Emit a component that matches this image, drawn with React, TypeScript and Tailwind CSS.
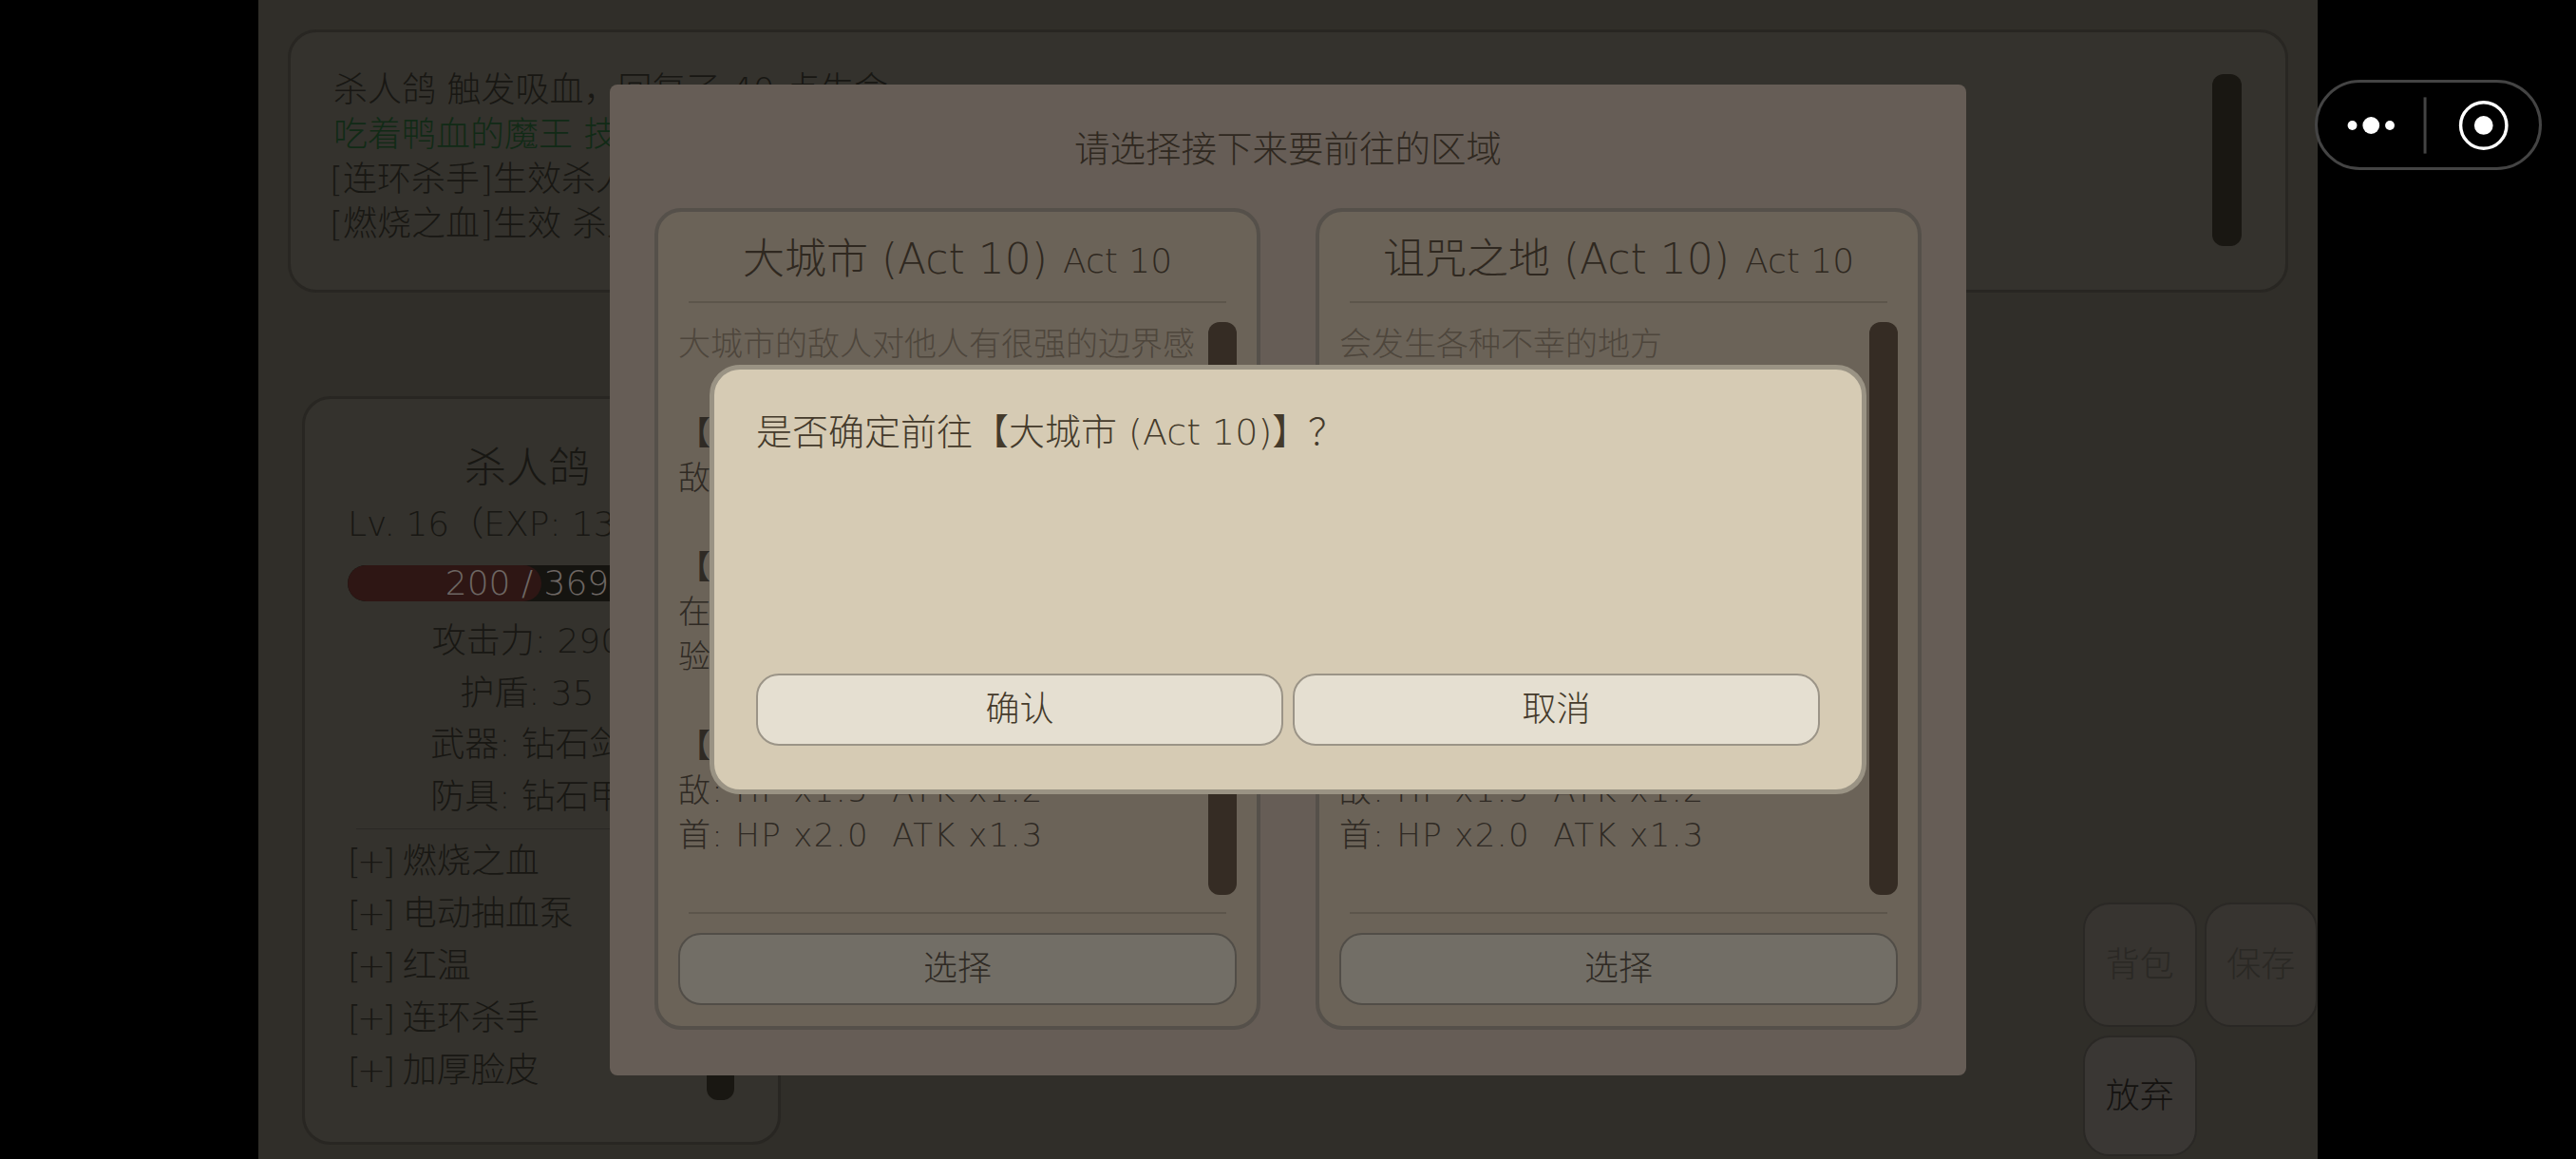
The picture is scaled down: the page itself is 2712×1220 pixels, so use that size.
const fontStack = { fontFamily: '"DejaVu Sans", "Noto Sans CJK SC", sans-serif' };

const regions = [
  {
    title: "大城市 (Act 10)",
    sub: "Act 10",
    desc: "大城市的敌人对他人有很强的边界感",
    lines: ["【普通战斗】", "敌: HP x1.2  ATK x1.1", "", "【特殊事件】", "在这里可以遇到各种事件", "验证你的实力", "", "【精英战斗】", "敌: HP x1.5  ATK x1.2", "首: HP x2.0  ATK x1.3"],
  },
  {
    title: "诅咒之地 (Act 10)",
    sub: "Act 10",
    desc: "会发生各种不幸的地方",
    lines: ["【普通战斗】", "敌: HP x1.2  ATK x1.1", "", "【特殊事件】", "在这里可以遇到各种诅咒", "验证你的运气", "", "【精英战斗】", "敌: HP x1.5  ATK x1.2", "首: HP x2.0  ATK x1.3"],
  },
];

const stats = ["攻击力: 290", "护盾: 35", "武器: 钻石剑", "防具: 钻石甲"];
const skills = ["燃烧之血", "电动抽血泵", "红温", "连环杀手", "加厚脸皮"];

function RegionCard({ region }: { region: (typeof regions)[number] }) {
  return (
    <div className="flex h-[865px] w-[638px] flex-col rounded-[28px] border-4 border-[#55504a] bg-[#6b6358] px-[21px] pb-[22px]">
      <div className="mx-[11px] flex h-[96px] shrink-0 items-center justify-center gap-4 border-b-2 border-[#5c554b] pt-[6px] text-[#2f2820]">
        <span className="text-[44px]">{region.title}</span>
        <span className="mt-1 text-[36px]">{region.sub}</span>
      </div>
      <div className="mt-[20px] flex h-[603px] shrink-0 gap-[10px]">
        <div className="min-w-0 flex-1 overflow-hidden text-[34px] leading-[47px] whitespace-pre text-[#2f2a24]">
          <div className="text-[#4e463c]">{region.desc}</div>
          <div>&nbsp;</div>
          {region.lines.map((line, i) => (
            <div key={i} className={line.startsWith("【") ? "font-bold" : "tracking-[0.04em]"}>
              {line || "\u00a0"}
            </div>
          ))}
        </div>
        <div className="w-[30px] shrink-0 rounded-xl bg-[#352c24]" />
      </div>
      <div className="mx-[11px] mt-[18px] border-b-2 border-[#5c554b]" />
      <button className="mt-[20px] h-[76px] shrink-0 rounded-[24px] border-2 border-[#514d47] bg-[#726e66] text-[36px] text-[#2f2a24]">
        选择
      </button>
    </div>
  );
}

function SideButton({ label, active }: { label: string; active?: boolean }) {
  return (
    <button
      className={`rounded-[28px] border-2 border-[#2a2825] text-[36px] ${
        active ? "h-[127px] bg-[#3a3734] text-[#141210]" : "h-[131px] bg-[#373430] text-[#2a2824]"
      }`}
    >
      {label}
    </button>
  );
}

function Capsule() {
  return (
    <div className="absolute top-[84px] left-[2437px] flex h-[95px] w-[239px] items-center rounded-full border-[3px] border-[#444444] bg-black">
      <svg width="236" height="89" viewBox="0 0 236 89" fill="none">
        <circle cx="37" cy="45" r="5" fill="#fff" />
        <circle cx="57" cy="45" r="9" fill="#fff" />
        <circle cx="77" cy="45" r="5" fill="#fff" />
        <rect x="113" y="15" width="3" height="60" fill="#444444" />
        <circle cx="177" cy="45" r="24.5" stroke="#fff" strokeWidth="3.5" />
        <circle cx="177" cy="45" r="10" fill="#fff" />
      </svg>
    </div>
  );
}

export default function App() {
  return (
    <div className="relative h-[1220px] w-[2712px] overflow-hidden bg-black font-light" style={fontStack}>
      {/* game behind the dim layer */}
      <div className="mx-auto flex h-full w-[2168px] flex-col bg-[#302e29]">
        <div className="mx-[31px] mt-[31px] flex h-[277px] shrink-0 rounded-[30px] border-[3px] border-[#282622] bg-[#34322d] pt-[37px] pr-[46px] pl-[45px] text-[36px] leading-[47px] text-[#181713]">
          <div className="flex-1 whitespace-pre">
            <div>杀人鸽 触发吸血，回复了 40 点生命</div>
            <div className="text-[#112a16]">吃着鸭血的魔王 技能发动</div>
            <div className="-ml-1">[连环杀手]生效杀人鸽获得攻击</div>
            <div className="-ml-1">[燃烧之血]生效 杀人鸽损失生命</div>
          </div>
          <div className="mt-[7px] h-[181px] w-[31px] rounded-xl bg-[#191712]" />
        </div>

        <div className="flex min-h-0 flex-1 items-end justify-between pl-[46px]">
          <div className="mb-[15px] flex h-[788px] w-[504px] gap-0 rounded-[30px] border-[3px] border-[#282622] bg-[#34322d] pr-[46px] pl-[45px] text-[36px] text-[#181713]">
            <div className="w-[378px] shrink-0">
              <div className="mt-[43px] text-center text-[44px] leading-[60px]">杀人鸽</div>
              <div className="text-[36px] leading-[58px] whitespace-nowrap">Lv. 16（EXP: 138）</div>
              <div className="relative mt-[14px] h-[38px] overflow-hidden rounded-full bg-[#151410]">
                <div className="h-full w-[54%] rounded-full bg-[#2e1614]" />
                <div className="absolute inset-0 text-center text-[36px] leading-[38px] text-[#6d6663]">200 / 369</div>
              </div>
              <div className="mt-[15px] text-center leading-[54.5px]">
                {stats.map((s) => (
                  <div key={s}>{s}</div>
                ))}
              </div>
              <div className="mx-[9px] my-[6px] border-b border-[#2a2824]" />
              <div className="leading-[55px]">
                {skills.map((s) => (
                  <div key={s}>
                    <span className="tracking-[-4px]">[+]</span> {s}
                  </div>
                ))}
              </div>
            </div>
            <div className="mt-[43px] mb-[44px] w-[29px] shrink-0 rounded-xl bg-[#191712]" />
          </div>

          <div className="mb-[3px] grid w-[247px] grid-cols-2 items-end gap-x-[8px] gap-y-[9px]">
            <SideButton label="背包" />
            <SideButton label="保存" />
            <SideButton label="放弃" active />
          </div>
        </div>
      </div>

      {/* region picker */}
      <div className="absolute inset-0 flex items-center justify-center">
        <div className="flex h-[1043px] w-[1428px] flex-col rounded-lg bg-[#665d56] px-[47px]">
          <div className="flex h-[130px] shrink-0 items-center justify-center pt-2 text-[37.5px] text-[#2f2820]">
            请选择接下来要前往的区域
          </div>
          <div className="flex justify-between">
            {regions.map((r) => (
              <RegionCard key={r.title} region={r} />
            ))}
          </div>
        </div>
      </div>

      {/* confirm dialog */}
      <div className="absolute inset-0 flex items-center justify-center">
        <div className="flex h-[452px] w-[1218px] flex-col rounded-[32px] border-[5px] border-[#9a9384] bg-[#d6cbb4] px-[44px] pb-[46px] text-[36px] text-[#443a2b]">
          <div className="mt-[36px] flex-1 text-[38px] leading-[60px]">是否确定前往【大城市 (Act 10)】？</div>
          <div className="flex gap-[10px]">
            <button className="h-[76px] flex-1 rounded-[24px] border-2 border-[#9b9487] bg-[#e5dfd1]">确认</button>
            <button className="h-[76px] flex-1 rounded-[24px] border-2 border-[#9b9487] bg-[#e5dfd1]">取消</button>
          </div>
        </div>
      </div>

      <Capsule />
    </div>
  );
}
